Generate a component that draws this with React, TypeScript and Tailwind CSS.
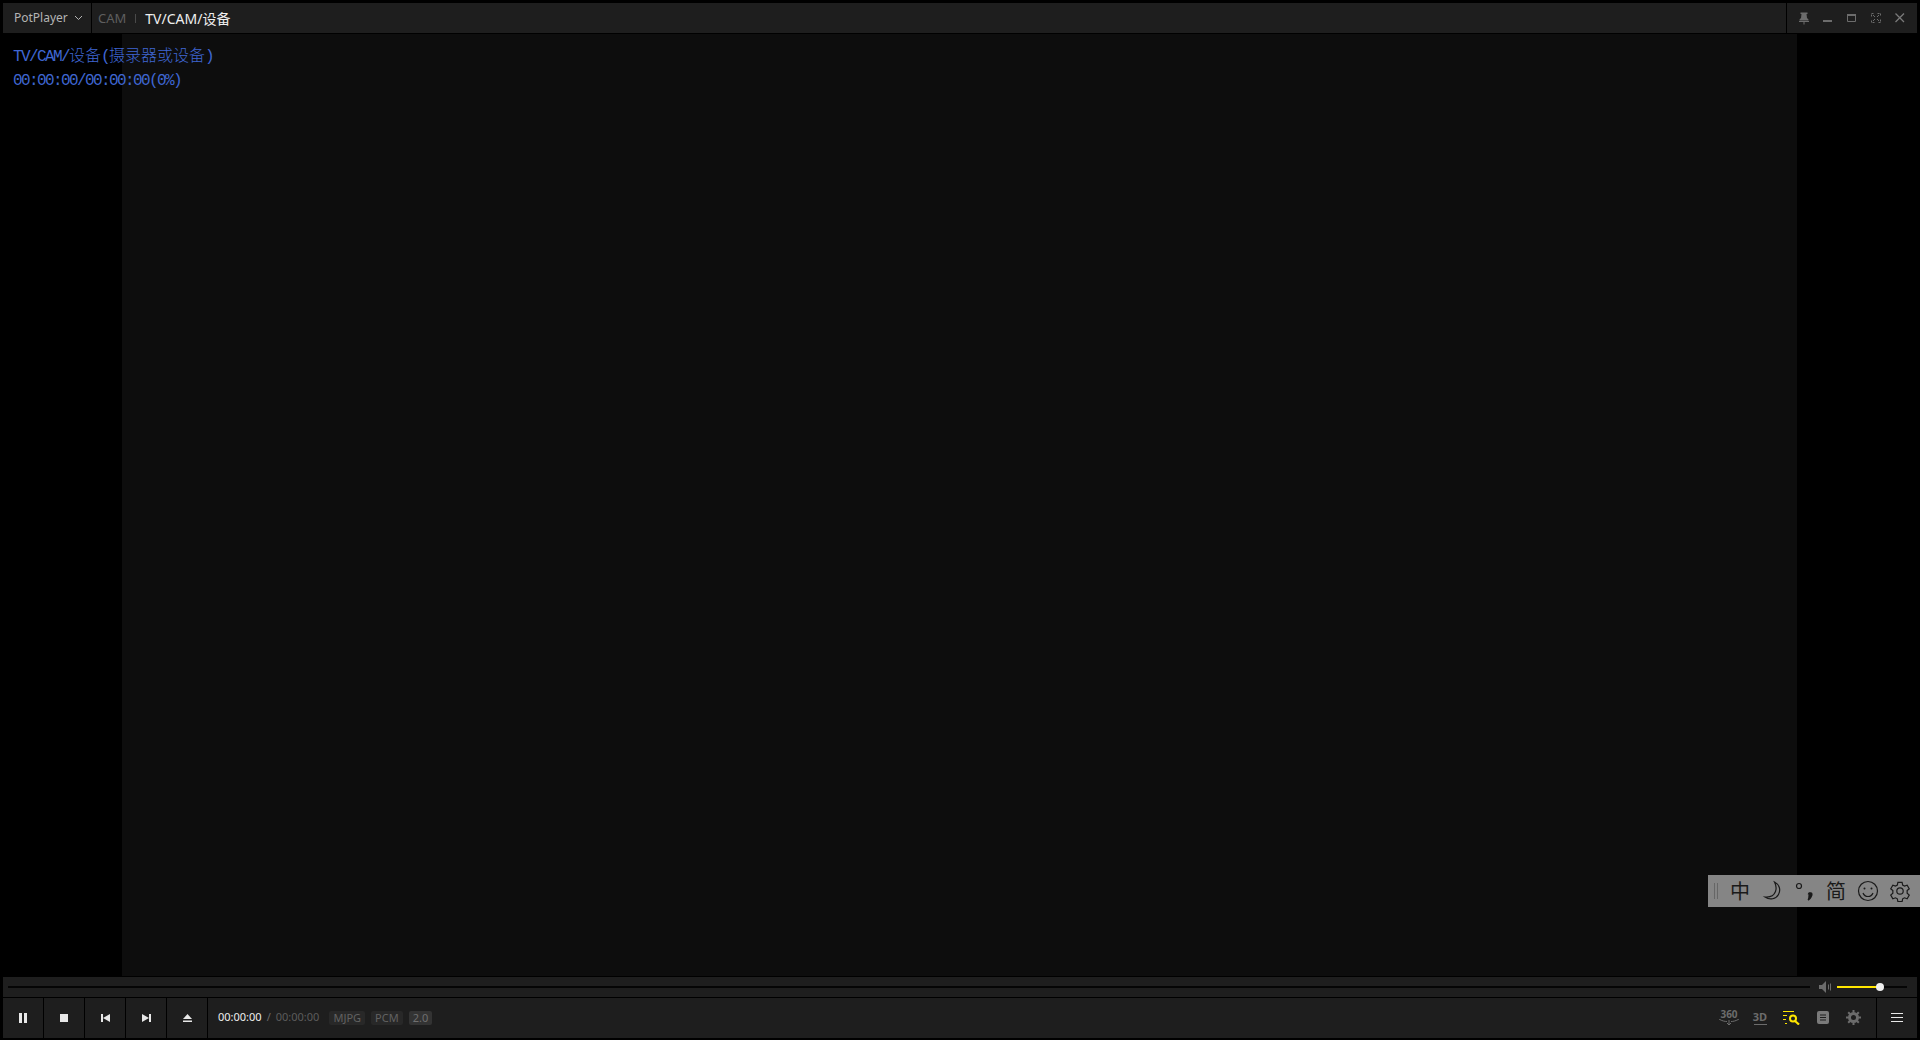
const sans = { fontFamily: '"Noto Sans", "Noto Sans CJK SC", sans-serif' };

function PlayerButton({ children }: { children: React.ReactNode }) {
    return <div className="flex h-full w-[40px] shrink-0 items-center justify-center bg-[#1e1e1e]">{children}</div>;
}

function Tag({ label, bright }: { label: string; bright?: boolean }) {
    return (
        <span className={`flex h-[14px] items-center rounded-[2px] px-[4px] text-[11px] leading-none ${bright ? "bg-[#333333] text-[#6f6f6f]" : "bg-[#282828] text-[#626262]"}`}>
            {label}
        </span>
    );
}

function Cjk({ children }: { children: React.ReactNode }) {
    return <span className="tracking-normal [font-family:'Noto_Sans_CJK_SC',sans-serif] font-light">{children}</span>;
}

export default function App() {
    return (
        <main className="relative flex h-[1040px] w-[1920px] flex-col overflow-hidden bg-black px-[3px] pb-[2px] pt-[3px] text-[#e8e8e8]" style={sans}>
            {/* title bar */}
            <header className="flex h-[30px] shrink-0 gap-px">
                <div className="flex w-[88px] items-center bg-[#1e1e1e] pb-px pl-[11px] text-[12px] text-[#b4b4b4]">
                    PotPlayer
                    <svg width="9" height="6" viewBox="0 0 9 6" className="ml-[6px] mt-[1px]" fill="none" stroke="#b4b4b4">
                        <path d="M1 1l3.5 3.5L8 1" />
                    </svg>
                </div>
                <div className="flex flex-1 items-center bg-[#1e1e1e] pl-[6px] pt-px text-[13px]">
                    <span className="text-[#5f5f5f]">CAM</span>
                    <span className="ml-[9px] h-[9px] w-px bg-[#4a4a4a]" />
                    <span className="ml-[9px] text-[14px] text-[#eeeeee]">TV/CAM/设备</span>
                </div>
                <div className="flex w-[130px] items-center gap-[8px] bg-[#1e1e1e] pl-[9px]">
                    <svg width="16" height="16" viewBox="0 0 16 16" fill="#6c6c6c">
                        <path d="M4.500 2.500h7v1.500h-1l.5 4 1.500 1.500v1h-9v-1L5 8l.5-4h-1zM3 11h10v1H8.500v2.500h-1V12H3z" />
                    </svg>
                    <svg width="16" height="16" viewBox="0 0 16 16" fill="#6c6c6c">
                        <rect x="3" y="10" width="9" height="2" />
                    </svg>
                    <svg width="16" height="16" viewBox="0 0 16 16" fill="none" stroke="#6c6c6c">
                        <path d="M3.500 4.500h8v7h-8z" />
                        <path d="M3 4h9v2H3z" fill="#6c6c6c" stroke="none" />
                    </svg>
                    <svg width="16" height="16" viewBox="0 0 16 16" fill="none" stroke="#6c6c6c">
                        <path d="M3.500 6.500v-3h3M9.500 3.500h3v3M12.500 9.500v3h-3M6.500 12.500h-3v-3" strokeDasharray="2 1" />
                        <path d="M5 5l2 2M11 5L9 7M11 11L9 9M5 11l2-2" />
                    </svg>
                    <svg width="16" height="16" viewBox="0 0 16 16" fill="none" stroke="#7a7a7a" strokeWidth="1.300">
                        <path d="M3.500 3.500l8.500 8.500M12 3.500L3.500 12" />
                    </svg>
                </div>
            </header>

            {/* video area */}
            <section className="mb-px mt-px flex min-h-0 flex-1">
                <div className="w-[119px] bg-black" />
                <div className="flex-1 bg-[#0d0d0d]" />
                <div className="w-[120px] bg-black" />
            </section>

            {/* on screen text */}
            <div className="absolute left-[13px] top-[42px] text-[16px] leading-[24px] tracking-[-1.6px] whitespace-pre text-[#3f66d2] [font-family:'Liberation_Mono',monospace]">
                <div>
                    TV/CAM/<Cjk>设备</Cjk>(<Cjk>摄录器或设备</Cjk>)
                </div>
                <div>00:00:00/00:00:00(0%)</div>
            </div>

            {/* input method bar */}
            <div className="absolute left-[1708px] top-[875px] flex h-[32px] w-[212px] items-center bg-[#858585] text-[#1a1a1a]">
                <span className="ml-[6px] h-[16px] w-[4px] border-x border-[#666666]" />
                <span className="ml-[12px] text-[20px] leading-none [font-family:'Noto_Sans_CJK_SC',sans-serif] font-normal">中</span>
                <svg width="22" height="22" viewBox="0 0 22 22" className="ml-[12px]" fill="none" stroke="#1a1a1a" strokeWidth="1.200">
                    <path d="M12.500 2c5 2.500 6.500 8 4 12.500S8 20.500 3 17c5 .5 9-1.500 10.500-5.500S14 5 12.500 2z" />
                </svg>
                <svg width="22" height="22" viewBox="0 0 22 22" className="ml-[10px]" fill="none" stroke="#1a1a1a">
                    <circle cx="5" cy="6" r="2.500" strokeWidth="1.200" />
                    <path d="M14.500 14.500a2 2 0 0 1 2-1.500c1.500 0 1.500 2 .5 3.500-.5 1-1.500 2.500-3 3.500" strokeWidth="1.800" fill="#1a1a1a" />
                </svg>
                <span className="ml-[10px] text-[20px] leading-none [font-family:'Noto_Sans_CJK_SC',sans-serif] font-normal">简</span>
                <svg width="22" height="22" viewBox="0 0 22 22" className="ml-[11px]" fill="none" stroke="#1a1a1a" strokeWidth="1.200">
                    <circle cx="11" cy="11" r="9.500" />
                    <circle cx="7.500" cy="8.500" r="1" fill="#1a1a1a" stroke="none" />
                    <circle cx="14.500" cy="8.500" r="1" fill="#1a1a1a" stroke="none" />
                    <path d="M6 13c1 2.500 3 3.500 5 3.500s4-1 5-3.500" />
                </svg>
                <svg width="22" height="22" viewBox="0 0 24 24" className="ml-[10px]" fill="none" stroke="#1a1a1a" strokeWidth="1.300">
                    <path d="M9.700 2.500h4.600l.6 3 2 1.100 2.900-1 2.300 4-2.300 2v2.800l2.300 2-2.300 4-2.900-1-2 1.100-.6 3H9.700l-.6-3-2-1.100-2.900 1-2.300-4 2.300-2v-2.800l-2.300-2 2.300-4 2.900 1 2-1.100z" />
                    <circle cx="12" cy="12" r="3.500" />
                </svg>
            </div>

            {/* seek bar and volume */}
            <div className="flex h-[20px] shrink-0 items-center bg-[#1e1e1e] pb-px pl-[5px] pr-[10px]">
                <div className="h-[2px] w-[1802px] bg-[#050505]" />
                <svg width="14" height="12" viewBox="0 0 14 12" className="ml-[9px]" fill="#6c6c6c">
                    <path d="M0 4h3l4-4v12L3 8H0z" />
                    <rect x="9" y="3.500" width="1" height="5" />
                    <rect x="11" y="2.500" width="1" height="7" />
                </svg>
                <div className="relative ml-[4px] h-[2px] w-[70px] bg-[#050505]">
                    <div className="h-full w-[43px] bg-[#ffe600]" />
                    <div className="absolute left-[39px] top-[-3px] h-[8px] w-[8px] rounded-full bg-[#eeeeee]" />
                </div>
            </div>

            {/* controls */}
            <footer className="mt-px flex h-[40px] shrink-0 gap-px text-[11px]">
                <PlayerButton>
                    <svg width="8" height="10" viewBox="0 0 8 10" fill="#e8e8e8"><rect width="3" height="10" /><rect x="5" width="3" height="10" /></svg>
                </PlayerButton>
                <PlayerButton>
                    <div className="h-[8px] w-[8px] bg-[#e8e8e8]" />
                </PlayerButton>
                <PlayerButton>
                    <svg width="9" height="8" viewBox="0 0 9 8" fill="#e8e8e8"><rect width="2" height="8" /><path d="M9 0v8L2 4z" /></svg>
                </PlayerButton>
                <PlayerButton>
                    <svg width="9" height="8" viewBox="0 0 9 8" fill="#e8e8e8"><rect x="7" width="2" height="8" /><path d="M0 0v8l7-4z" /></svg>
                </PlayerButton>
                <PlayerButton>
                    <svg width="9" height="8" viewBox="0 0 9 8" fill="#e8e8e8"><path d="M4.500 0L9 5H0z" /><rect y="6.500" width="9" height="1.500" /></svg>
                </PlayerButton>
                <div className="flex flex-1 items-center bg-[#1e1e1e] pb-px pl-[10px]">
                    <span className="text-[#eeeeee]">00:00:00</span>
                    <span className="ml-[5px] text-[#6a6a6a]">/</span>
                    <span className="ml-[5px] text-[#5c5c5c]">00:00:00</span>
                    <div className="ml-[10px] flex gap-[6px]">
                        <Tag label="MJPG" />
                        <Tag label="PCM" />
                        <Tag label="2.0" bright />
                    </div>
                    <div className="ml-auto flex items-center text-[#6c6c6c]">
                        <div className="flex w-[22px] flex-col items-center">
                            <span className="text-[10px] font-bold leading-[10px]">360</span>
                            <svg width="22" height="7" viewBox="0 0 22 7" fill="none" stroke="#6c6c6c">
                                <path d="M1 0c3 2 6 2.500 8 2.500M21 0c-3 2-6 2.500-8 2.500M11 1v5M9 4l2 2 2-2" />
                            </svg>
                        </div>
                        <div className="ml-[13px] flex w-[14px] flex-col items-center text-[11px] font-bold leading-[12px]">
                            3D
                            <div className="mt-[1px] h-px w-[13px] bg-[#6c6c6c]" />
                        </div>
                        <svg width="17" height="14" viewBox="0 0 17 14" className="ml-[16px]" fill="none" stroke="#ffe600">
                            <path d="M0 .5h11M0 4.500h4M0 8.500h3M2 12.500h2" />
                            <circle cx="10" cy="7.500" r="3" strokeWidth="2" />
                            <path d="M12 10l4 3.500" strokeWidth="2.200" />
                        </svg>
                        <svg width="12" height="13" viewBox="0 0 12 13" className="ml-[17px]">
                            <rect width="12" height="13" rx="2" fill="#7a7a7a" />
                            <path d="M3 4h6M3 6.500h6M3 9h6" stroke="#1e1e1e" />
                        </svg>
                        <svg width="15" height="15" viewBox="0 0 15 15" className="ml-[17px] mr-[15px]" fill="none">
                            <circle cx="7.500" cy="7.500" r="4" stroke="#6c6c6c" strokeWidth="3" />
                            <path d="M7.500 0v15M0 7.500h15M2.200 2.200l10.600 10.600M12.800 2.200L2.200 12.800" stroke="#6c6c6c" strokeWidth="2" strokeDasharray="2.500 10" />
                        </svg>
                    </div>
                </div>
                <div className="flex w-[40px] items-center justify-center bg-[#1e1e1e] pb-px">
                    <svg width="12" height="9" viewBox="0 0 12 9" fill="#e8e8e8"><rect width="12" height="1" /><rect y="4" width="12" height="1" /><rect y="8" width="12" height="1" /></svg>
                </div>
            </footer>
        </main>
    );
}
